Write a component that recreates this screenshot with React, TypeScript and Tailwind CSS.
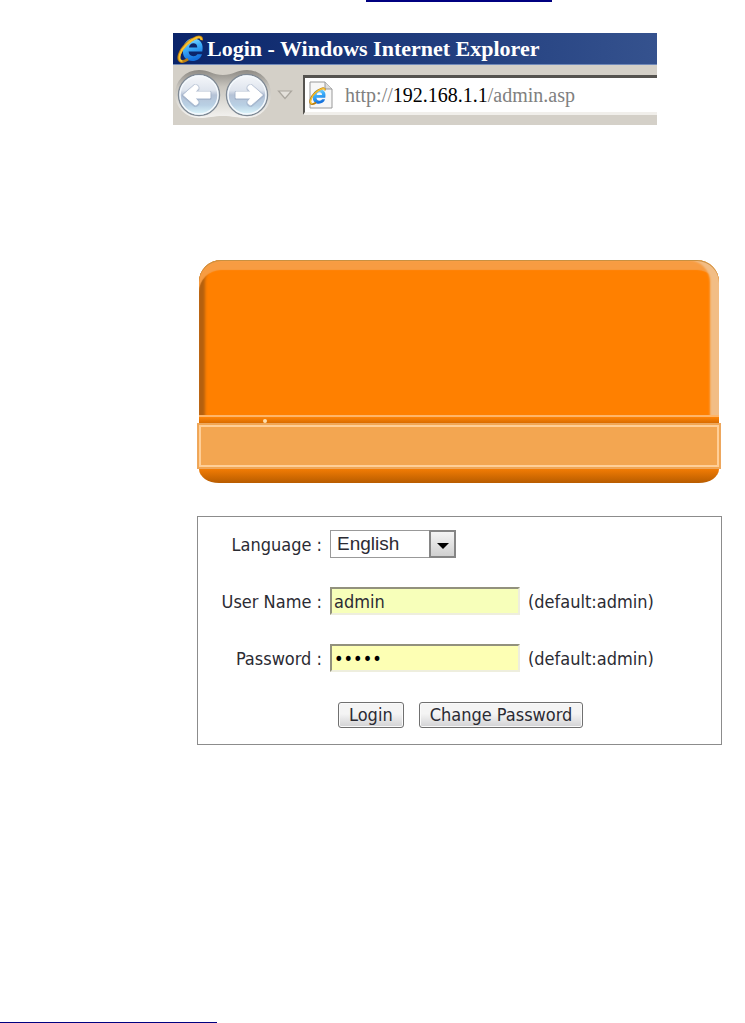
import { useState, type FormEvent } from 'react';

const languages = ['English'];

const IeLogo = ({ className }: { className: string }) => (
  <svg viewBox="0 0 28 28" className={className} aria-hidden="true">
    <defs>
      <linearGradient id="ieBlue" x1="0" y1="0" x2="0.3" y2="1">
        <stop offset="0" stopColor="#a5e6ff" />
        <stop offset="0.45" stopColor="#3fb2fa" />
        <stop offset="1" stopColor="#1470dc" />
      </linearGradient>
    </defs>
    <path
      d="M15.6 3.6C21.6 3.2 26.2 7.4 25.6 13.6L25.3 16.6H11.6C11.8 19.6 13.6 21.2 16.4 21.2C18.4 21.2 19.6 20.4 20.4 19.2H25C23.6 23.6 20 26 15.4 26C9.4 26 5.6 22 5.9 15.8C6.2 8.8 10 4 15.6 3.6ZM11.9 12.6H20.3C20.3 9.8 18.8 8.3 16.4 8.3C14 8.3 12.4 9.9 11.9 12.6Z"
      fill="url(#ieBlue)"
      fillRule="evenodd"
    />
    <path
      d="M24.6 5.2C25 2.4 23 1.3 19.6 2.4C12.6 4.8 4.6 12.4 2.4 19.4C1 23.8 2 27 5.6 26.6C7.4 26.4 9.4 25.4 11 24.2"
      fill="none"
      stroke="#b97d10"
      strokeWidth="2.8"
    />
    <path
      d="M24.4 4.8C24.6 2.6 22.8 1.8 19.6 2.8C12.8 5.4 5.2 12.6 3 19.2C1.8 23.2 2.4 26 5.4 26"
      fill="none"
      stroke="#f8c22e"
      strokeWidth="2"
    />
  </svg>
);

const NavButton = ({ label, flip }: { label: string; flip?: boolean }) => (
  <button type="button" aria-label={label} className="size-11">
    <svg viewBox="0 0 44 44" className={flip ? '-scale-x-100' : ''} aria-hidden="true">
      <defs>
        <linearGradient id="navFill" x1="0" y1="0" x2="0" y2="1">
          <stop offset="0" stopColor="#f6f8fb" />
          <stop offset="0.38" stopColor="#dfe5ee" />
          <stop offset="0.5" stopColor="#b5c2d6" />
          <stop offset="0.75" stopColor="#b9d0e4" />
          <stop offset="1" stopColor="#e2fcff" />
        </linearGradient>
      </defs>
      <circle cx="22" cy="22" r="20.5" fill="url(#navFill)" stroke="#7f8994" strokeWidth="1.4" />
      <circle cx="22" cy="22" r="19" fill="none" stroke="#f4f9fd" strokeWidth="1.5" />
      <path
        d="M6.5 22.5L18 12.5C20 12.5 21.5 14 21 16L18 19.5H33V25.5H18L21 29C21.5 31 20 32.5 18 32.5Z"
        fill="none"
        stroke="#93a4bd"
        strokeWidth="3"
        strokeLinejoin="round"
        opacity="0.5"
      />
      <path
        d="M6.5 22L18 12C20 12 21.5 13.5 21 15.5L18 19H33V25H18L21 28.5C21.5 30.5 20 32 18 32Z"
        fill="#fff"
        stroke="#fff"
        strokeWidth="1"
        strokeLinejoin="round"
      />
    </svg>
  </button>
);

const BrowserBar = () => (
  <header className="mr-[88px] font-['Liberation_Serif',serif]">
    <div className="flex h-8 items-center border-b border-[#7189b8] bg-linear-to-r from-[#0a246a] to-[#35528e] pl-1 text-white">
      <IeLogo className="size-7 shrink-0" />
      <h1 className="pl-0.5 text-[22px] leading-7 font-bold whitespace-nowrap">
        Login - Windows Internet Explorer
      </h1>
    </div>
    <div className="flex h-15 items-center bg-[#d4d0c8] pl-1">
      <div className="relative shrink-0">
        <svg viewBox="0 0 96 50" className="absolute -top-1 -left-0.5 h-[50px] w-24" aria-hidden="true">
          <defs>
            <linearGradient id="navTray" x1="0" y1="0" x2="0" y2="1">
              <stop offset="0" stopColor="#8d8a84" />
              <stop offset="0.35" stopColor="#c8c5be" />
              <stop offset="1" stopColor="#f4f3f0" />
            </linearGradient>
          </defs>
          <path
            d="M24 1C34 1 38 6 48 6S62 1 72 1A24 24 0 0 1 72 49C62 49 58 47 48 47S34 49 24 49A24 24 0 0 1 24 1Z"
            fill="url(#navTray)"
          />
        </svg>
        <div className="relative flex gap-1">
          <NavButton label="Back" />
          <NavButton label="Forward" flip />
        </div>
      </div>
      <button type="button" aria-label="Recent pages" className="ml-2 shrink-0">
        <svg viewBox="0 0 16 12" className="h-3 w-4" aria-hidden="true">
          <path d="M1.5 2H14.5L8 9.5Z" fill="#e4e1db" stroke="#aaa69e" strokeWidth="1.2" />
        </svg>
      </button>
      <div className="ml-2.5 flex h-10 min-w-0 grow items-center border-t-3 border-b-3 border-l-2 border-t-[#55534f] border-b-[#f1efeb] border-l-[#55534f] bg-white pl-1">
        <div className="relative h-7 w-6 shrink-0">
          <svg viewBox="0 0 24 28" className="h-7 w-6" aria-hidden="true">
            <path d="M1 1H16L23 8V27H1Z" fill="#f7f7f7" stroke="#999" />
            <path d="M16 1V8H23" fill="#ddd" stroke="#999" />
          </svg>
          <IeLogo className="absolute top-1.5 left-0 size-4.5" />
        </div>
        <p className="pl-3 text-[20px] leading-7 whitespace-nowrap text-[#808080]">
          http://<span className="text-black">192.168.1.1</span>/admin.asp
        </p>
      </div>
    </div>
  </header>
);

const Banner = () => (
  <div className="mr-6 ml-6">
    <div className="mx-0.5 flex h-[163px] flex-col justify-end rounded-t-[22px] bg-[#ff8000] shadow-[inset_0_1px_0_#c99040,inset_-9px_0_2px_#f2bd85,inset_0_10px_1px_#f79c42,inset_6px_0_3px_#b4600f]">
      <div className="flex h-2 items-end border-t-2 border-[#ffb568] bg-linear-to-b from-[#ff8508] to-[#d96c00] pl-16">
        <span className="size-1 rounded-full bg-[#ffe0ae]" />
      </div>
    </div>
    <div className="h-[46px] border border-[#eda75e] bg-[#f3a651] p-px">
      <div className="h-full border-2 border-[#ffcf98]" />
    </div>
    <div className="mx-0.5 h-[14px] rounded-b-[20px_14px] bg-linear-to-b from-[#f27c05] to-[#b85c00]" />
  </div>
);

const buttonClass =
  'h-[26px] rounded-[3px] border border-[#707070] bg-linear-to-b from-[#f4f4f4] from-45% to-[#d2d2d4] px-2.5 leading-6 shadow-[inset_0_0_0_1px_#fafafa]';
const labelClass = 'w-[124px] shrink-0 text-right whitespace-nowrap';
const inputClass =
  'h-7 w-[190px] border-2 border-t-[#92917d] border-r-[#eeeede] border-b-[#eeeede] border-l-[#92917d] pl-0.5 outline-none';

const LoginForm = () => {
  const [language, setLanguage] = useState('English');
  const [userName, setUserName] = useState('admin');
  const [password, setPassword] = useState('admin');

  const handleSubmit = (e: FormEvent) => {
    e.preventDefault();
  };

  return (
    <form
      onSubmit={handleSubmit}
      className="mr-[23px] ml-6 flex flex-col gap-[29px] border border-[#8c8c8c] pt-[13px] pb-[15px] font-['DejaVu_Sans_Condensed','DejaVu_Sans',sans-serif] text-[18px] text-[#2b2b33]">
      <div className="flex h-7 items-center gap-2">
        <label htmlFor="language" className={labelClass}>
          Language :
        </label>
        <div className="relative">
          <select
            id="language"
            value={language}
            onChange={e => setLanguage(e.target.value)}
            className="h-7 w-[126px] appearance-none border border-[#999] bg-white pl-1.5 font-['Liberation_Sans',sans-serif] text-[19px] leading-6 outline-none">
            {languages.map(lang => (
              <option key={lang}>{lang}</option>
            ))}
          </select>
          <span className="pointer-events-none absolute top-0 right-0 flex h-7 w-[27px] items-center justify-center border-2 border-[#858585] bg-linear-to-b from-[#f4f4f4] to-[#d0d0d0] pt-1">
            <svg viewBox="0 0 12 6" className="h-1.5 w-3" aria-hidden="true">
              <path d="M0 0H12L6 6Z" fill="#000" />
            </svg>
          </span>
        </div>
      </div>
      <div className="flex h-7 items-center gap-2">
        <label htmlFor="userName" className={labelClass}>
          User Name :
        </label>
        <input
          id="userName"
          type="text"
          value={userName}
          onChange={e => setUserName(e.target.value)}
          className={`${inputClass} bg-[#f7ffba]`}
        />
        <span>(default:admin)</span>
      </div>
      <div className="flex h-7 items-center gap-2">
        <label htmlFor="password" className={labelClass}>
          Password :
        </label>
        <input
          id="password"
          type="password"
          value={password}
          onChange={e => setPassword(e.target.value)}
          className={`${inputClass} bg-[#fdffb4] text-black`}
        />
        <span>(default:admin)</span>
      </div>
      <div className="flex h-7 items-center gap-[15px] pl-[140px]">
        <button type="submit" className={buttonClass}>
          Login
        </button>
        <button type="button" className={buttonClass}>
          Change Password
        </button>
      </div>
    </form>
  );
};

const App = () => {
  return (
    <main className="flex min-h-screen flex-col bg-white">
      <hr className="mr-[193px] ml-[366px] border-t-2 border-[#000080]" />
      <div className="mt-[31px] ml-[173px]">
        <BrowserBar />
        <div className="mt-[135px]">
          <Banner />
        </div>
        <div className="mt-[33px]">
          <LoginForm />
        </div>
      </div>
      <hr className="mt-auto w-[217px] border-[#000080]" />
    </main>
  );
};

export default App;
